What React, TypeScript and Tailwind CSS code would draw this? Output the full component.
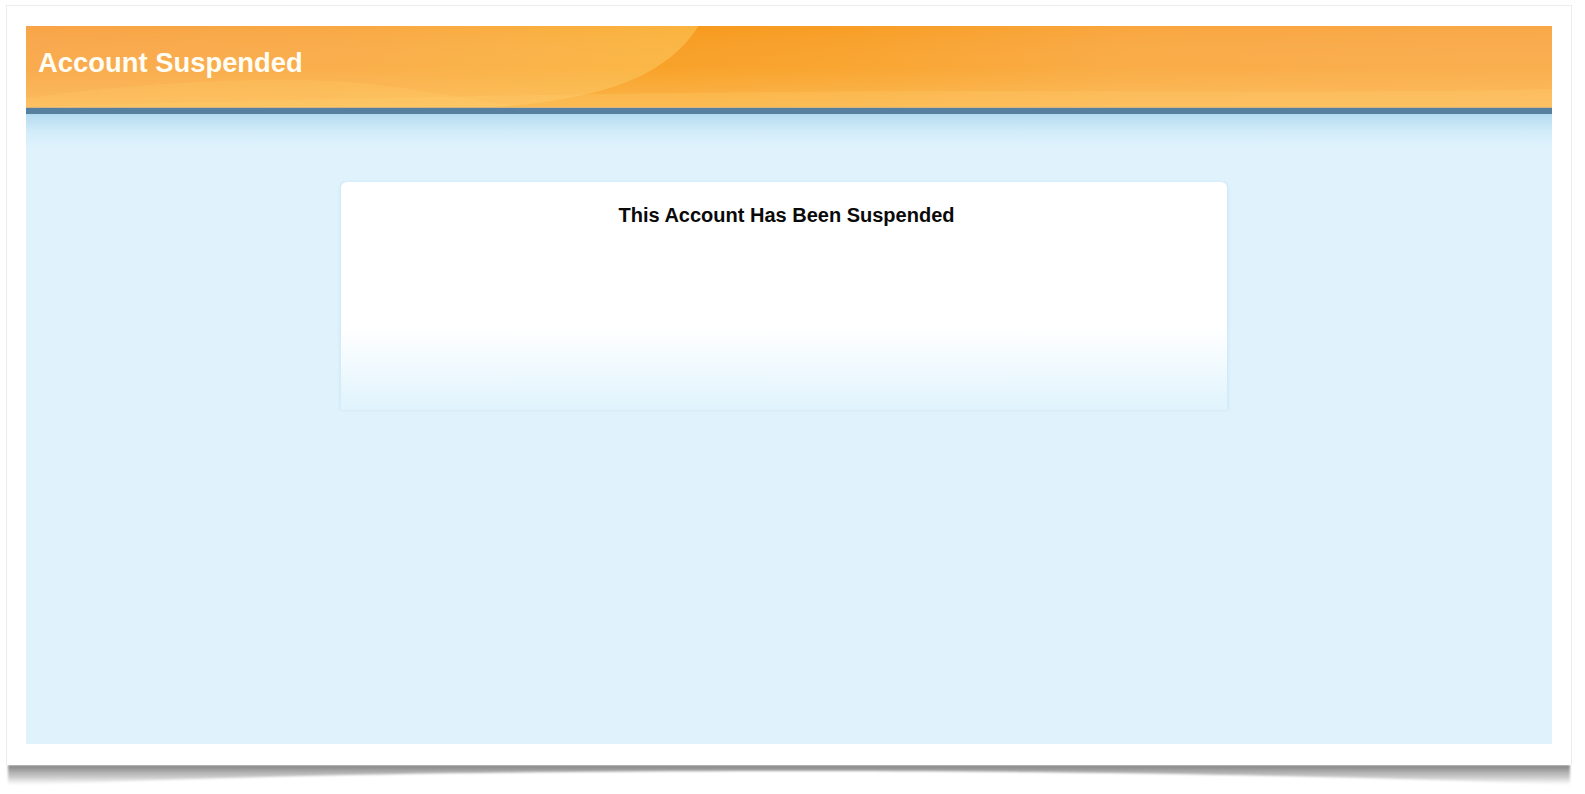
export default function App() {
	return (
		<div className="min-h-[794px] w-full bg-white pl-[6px] pt-[5px] font-['Liberation_Sans',Arial,sans-serif]">
			<div className="relative w-[1566px]">
				<PageShadow />
				<div className="relative border border-b-0 border-[#ececec] bg-white px-[19px] pb-[21px] pt-[20px]">
					<div className="relative h-[81px] overflow-hidden bg-[#f9a944]">
						<HeaderSwoosh />
						<h1 className="relative pl-[12px] pt-[21px] text-[27.4px] font-bold leading-[31px] text-[#fffdf4]">
							Account Suspended
						</h1>
					</div>
					<div className="h-[7px] border-t border-[#d8b57a] bg-[#577fa0]" />
					<div className="h-[630px] bg-[linear-gradient(to_bottom,#b4dbf1_0px,#d3ecf9_18px,#e0f3fd_34px,#e0f3fd_100%)] pt-[68px]">
						<div className="ml-[315px] h-[228px] w-[886px] rounded-t-[6px] bg-[linear-gradient(to_bottom,#ffffff_0%,#ffffff_64%,#f3fbfe_78%,#e0f3fd_100%)] pl-[29px] pr-[24px] pt-[22px] shadow-[-2px_0_3px_rgba(170,210,232,0.25),2px_0_3px_rgba(170,210,232,0.25)]">
							<h2 className="text-center text-[20px] font-bold leading-[23px] text-[#0a0a0a]">
								This Account Has Been Suspended
							</h2>
						</div>
					</div>
				</div>
			</div>
		</div>
	);
}

function HeaderSwoosh() {
	return (
		<svg
			className="absolute inset-0 h-full w-full"
			viewBox="0 0 1525 81"
			preserveAspectRatio="none"
		>
			<defs>
				<linearGradient id="base" x1="0" y1="0" x2="1525" y2="0" gradientUnits="userSpaceOnUse">
					<stop offset="0" stopColor="#f8a446" />
					<stop offset="0.2" stopColor="#f9a843" />
					<stop offset="0.44" stopColor="#fab33c" />
					<stop offset="1" stopColor="#fab33c" />
				</linearGradient>
				<linearGradient id="dark" x1="480" y1="0" x2="1525" y2="0" gradientUnits="userSpaceOnUse">
					<stop offset="0.15" stopColor="#f7991b" />
					<stop offset="0.35" stopColor="#f89e26" />
					<stop offset="0.6" stopColor="#f9a63e" />
					<stop offset="1" stopColor="#f9a847" />
				</linearGradient>
				<linearGradient id="shade" x1="0" y1="0" x2="0" y2="1">
					<stop offset="0" stopColor="#ffffff" stopOpacity="0" />
					<stop offset="0.5" stopColor="#ffd27a" stopOpacity="0.15" />
					<stop offset="1" stopColor="#ffd27a" stopOpacity="0.5" />
				</linearGradient>
			</defs>
			<rect x="0" y="0" width="1525" height="81" fill="url(#base)" />
			<path
				d="M0,81 L0,72 C120,56 240,50 320,56 C400,62 460,78 500,81 Z"
				fill="#ffc255"
				fillOpacity="0.35"
			/>
			<path
				d="M672,0 C645,42 595,72 470,81 L1525,81 L1525,0 Z"
				fill="url(#dark)"
			/>
			<rect x="0" y="0" width="1525" height="81" fill="url(#shade)" />
			<path
				d="M0,81 C300,72 700,64 1000,65 C1200,66 1400,66 1525,63 L1525,81 Z"
				fill="#ffcf70"
				fillOpacity="0.25"
			/>
		</svg>
	);
}

function PageShadow() {
	return (
		<svg
			className="absolute left-0 top-full h-[24px] w-full"
			viewBox="0 0 1566 24"
			preserveAspectRatio="none"
		>
			<defs>
				<linearGradient id="shadow" x1="0" y1="0" x2="0" y2="1">
					<stop offset="0" stopColor="#7e7e7e" />
					<stop offset="0.6" stopColor="#b8b8b8" stopOpacity="0.7" />
					<stop offset="1" stopColor="#e0e0e0" stopOpacity="0" />
				</linearGradient>
				<filter id="blur" x="-5%" y="-50%" width="110%" height="200%">
					<feGaussianBlur stdDeviation="1.3" />
				</filter>
			</defs>
			<path
				d="M2,0 L1564,0 L1564,20 C1300,9 1000,6 783,6 C560,6 260,9 2,21 Z"
				fill="url(#shadow)"
				filter="url(#blur)"
			/>
		</svg>
	);
}
